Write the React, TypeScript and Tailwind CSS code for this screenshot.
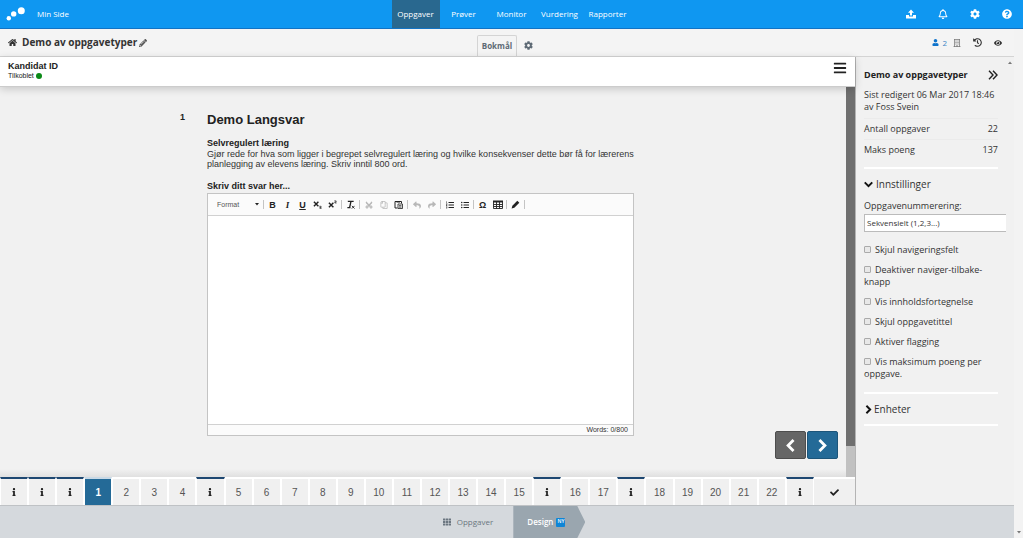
import type { ReactNode } from "react"
import {
  FaBars,
  FaCheck,
  FaCog,
  FaCut,
  FaEye,
  FaHistory,
  FaHome,
  FaInfo,
  FaListOl,
  FaListUl,
  FaPencilAlt,
  FaQuestionCircle,
  FaRegBell,
  FaRegBuilding,
  FaRegCopy,
  FaPaste,
  FaReply,
  FaShare,
  FaTh,
  FaUser,
} from "react-icons/fa"

const mainNav = ["Oppgaver", "Prøver", "Monitor", "Vurdering", "Rapporter"]

// "i" is an information page, numbers are questions
const pages = [
  "i", "i", "i", "1", "2", "3", "4", "i", "5", "6", "7", "8", "9", "10", "11",
  "12", "13", "14", "15", "i", "16", "17", "i", "18", "19", "20", "21", "22", "i",
]

const settings = [
  "Skjul navigeringsfelt",
  "Deaktiver naviger-tilbake-knapp",
  "Vis innholdsfortegnelse",
  "Skjul oppgavetittel",
  "Aktiver flagging",
  "Vis maksimum poeng per oppgave.",
]

function Chevron({ className }: { className: string }) {
  return (
    <svg viewBox="0 0 12 12" className={className} fill="none" stroke="currentColor" strokeWidth="2.6" aria-hidden="true">
      <path d="M3.200 1L8.200 6 3.200 11" />
    </svg>
  )
}

function UploadIcon() {
  return (
    <svg viewBox="0 0 10 10" className="size-[10px]" fill="currentColor" aria-hidden="true">
      <path d="M5 .5L8 3.800H6V6.500H4V3.800H2z" />
      <path d="M0 6h3v1.500h4V6h3v3.500H0z" />
    </svg>
  )
}

function TopBar() {
  const icons = [
    { label: "Last opp", icon: <UploadIcon /> },
    { label: "Varsler", icon: <FaRegBell /> },
    { label: "Innstillinger", icon: <FaCog /> },
    { label: "Hjelp", icon: <FaQuestionCircle /> },
  ]
  return (
    <header className="grid h-[29px] shrink-0 grid-cols-[1fr_auto_1fr] border-b border-[#1273c4] bg-[#0f97f1] text-[8px] text-white">
      <div className="flex items-center gap-[11px] pl-[6px]">
        <svg viewBox="0 0 20 15" className="h-[15px] w-5" fill="currentColor" aria-hidden="true">
          <circle cx="2.8" cy="11.3" r="2.2" />
          <circle cx="7.7" cy="6.9" r="2.7" />
          <circle cx="15.3" cy="3.7" r="3.5" />
        </svg>
        <a href="#">Min Side</a>
      </div>
      <nav className="flex">
        {mainNav.map((item, i) => (
          <a
            key={item}
            href="#"
            className={`flex w-12 items-center justify-center ${i === 0 ? "bg-[#29688f]" : ""}`}
          >
            {item}
          </a>
        ))}
      </nav>
      <div className="flex justify-end">
        {icons.map(({ label, icon }) => (
          <button key={label} aria-label={label} className="flex w-8 items-center justify-center text-[10px]">
            {icon}
          </button>
        ))}
      </div>
    </header>
  )
}

function SubHeader() {
  return (
    <div className="grid h-7 shrink-0 grid-cols-[1fr_auto_1fr] border-b border-[#d4d4d4] bg-[#f4f4f4]">
      <div className="flex items-center gap-[5px] pl-2 text-[#333]">
        <FaHome className="size-[9px]" />
        <h1 className="text-[10px] font-bold">Demo av oppgavetyper</h1>
        <button aria-label="Rediger tittel" className="-ml-[3px] text-[#555]">
          <FaPencilAlt className="size-2" />
        </button>
      </div>
      <div className="flex items-end gap-[7px] pr-1 text-[#5e6a75]">
        <button className="h-[21px] rounded-t-[2px] border border-b-0 border-[#d4d4d4] px-1 text-[8px] font-bold">
          Bokmål
        </button>
        <button aria-label="Språkinnstillinger" className="pb-[6px]">
          <FaCog className="size-[9px]" />
        </button>
      </div>
      <div className="flex items-center justify-end gap-3 pr-3 text-[#333]">
        <span className="flex items-center gap-[3px] text-[8px] text-[#3d86c6]">
          <FaUser className="size-[7px] text-[#0f74cc]" />2
          <FaRegBuilding className="ml-[3px] size-2 text-[#777]" />
        </span>
        <FaHistory className="size-[9px]" />
        <FaEye className="size-2" />
      </div>
    </div>
  )
}

function Separator() {
  return <span className="mx-px h-[9px] w-px shrink-0 bg-[#c4c4c4]" />
}

function Tool({ label, muted, children }: { label: string; muted?: boolean; children: ReactNode }) {
  return (
    <button
      aria-label={label}
      className={`flex w-[15px] shrink-0 items-center justify-center text-[9px] ${muted ? "text-[#b8b8b8]" : "text-[#222]"}`}
    >
      {children}
    </button>
  )
}

function Toolbar() {
  return (
    <div className="flex h-[22px] items-center border-b border-[#d1d1d1] bg-[#fbfbfb] pl-[9px]">
      <div className="flex w-[45px] items-center text-[#555]">
        <select aria-label="Format" className="w-[38px] appearance-none text-[7px]">
          <option>Format</option>
        </select>
        <svg viewBox="0 0 4 3" className="h-[3px] w-1" fill="#222" aria-hidden="true">
          <path d="M0 0h4L2 2.6z" />
        </svg>
      </div>
      <Separator />
      <Tool label="Fet"><b>B</b></Tool>
      <Tool label="Kursiv"><i className="font-['Liberation_Serif',serif] font-bold">I</i></Tool>
      <Tool label="Understreket"><b className="underline">U</b></Tool>
      <Tool label="Senket">
        <svg viewBox="0 0 10 10" className="size-[9px]" fill="none" stroke="currentColor" strokeWidth="1.6" aria-hidden="true">
          <path d="M1 2l5 5M6 2L1 7" />
          <path d="M7 7h2v1.3H7.6v1H9.5" strokeWidth=".8" />
        </svg>
      </Tool>
      <Tool label="Hevet">
        <svg viewBox="0 0 10 10" className="size-[9px]" fill="none" stroke="currentColor" strokeWidth="1.6" aria-hidden="true">
          <path d="M1 3l5 5M6 3L1 8" />
          <path d="M7 1h2v1.3H7.6v1H9.5" strokeWidth=".8" />
        </svg>
      </Tool>
      <Separator />
      <Tool label="Fjern formatering">
        <svg viewBox="0 0 10 10" className="size-[9px]" fill="none" stroke="currentColor" strokeWidth="1.5" aria-hidden="true">
          <path d="M2 1.5h6.5M5.5 1.5L4 8.500M1.500 8.500h3.500" />
          <path d="M6.500 6.500l3 3M9.500 6.500l-3 3" strokeWidth="1" />
        </svg>
      </Tool>
      <Separator />
      <Tool label="Klipp ut" muted><FaCut className="size-2 -rotate-90" /></Tool>
      <Tool label="Kopier" muted><FaRegCopy className="size-2 -scale-x-100" /></Tool>
      <Tool label="Lim inn">
        <svg viewBox="0 0 9 9" className="size-[9px]" fill="none" stroke="currentColor" aria-hidden="true">
          <path d="M3.500 8H1V1.500h6.500V3.500" />
          <path d="M2.500 1h3.500v1.500H2.500z" fill="currentColor" stroke="none" />
          <path d="M4 4h4.500v4.500H4zM5 5.700h2.500M5 7.100h2.500" strokeWidth=".8" />
        </svg>
      </Tool>
      <Separator />
      <Tool label="Angre" muted><FaReply className="size-2" /></Tool>
      <Tool label="Gjør om" muted><FaShare className="size-2" /></Tool>
      <Separator />
      <Tool label="Nummerert liste"><FaListOl className="size-2" /></Tool>
      <Tool label="Punktliste"><FaListUl className="size-2" /></Tool>
      <Separator />
      <Tool label="Spesialtegn"><b>Ω</b></Tool>
      <Tool label="Tabell">
        <svg viewBox="0 0 10 9" className="h-[9px] w-[10px]" fill="none" stroke="currentColor" aria-hidden="true">
          <path d="M.5 1.500h9v7h-9zM.5 4.500h9M.5 6.500h9M3.500 2v6.500M6.500 2v6.500" strokeWidth=".9" />
          <path d="M0 .5h10v2H0z" fill="currentColor" stroke="none" />
        </svg>
      </Tool>
      <Separator />
      <Tool label="Tegn">
        <svg viewBox="0 0 9 9" className="size-[9px]" fill="currentColor" aria-hidden="true">
          <path d="M6.300.8l2 2-5 5L.6 8.500l.8-2.800z" />
        </svg>
      </Tool>
      <Separator />
    </div>
  )
}

function Question() {
  return (
    <div className="mx-auto flex w-full max-w-[486px] pt-[25px] pr-8 text-[9px] leading-[10px] text-[#333]">
      <span className="w-[27px] shrink-0 font-bold text-[#222]">1</span>
      <div className="min-w-0 flex-1">
        <h2 className="text-[13px] leading-4 font-bold text-[#222]">Demo Langsvar</h2>
        <h3 className="mt-[10px] leading-[11px] font-bold text-[#222]">Selvregulert læring</h3>
        <p>
          Gjør rede for hva som ligger i begrepet selvregulert læring og hvilke konsekvenser dette bør få for lærerens
          planlegging av elevens læring. Skriv inntil 800 ord.
        </p>
        <label htmlFor="answer" className="mt-3 mb-[2px] block font-bold text-[#222]">
          Skriv ditt svar her...
        </label>
        <div className="border border-[#c4c4c4] bg-white">
          <Toolbar />
          <textarea id="answer" className="block h-[208px] w-full resize-none bg-white p-2 outline-none" />
          <div className="border-t border-[#d1d1d1] bg-[#fbfbfb] pr-[5px] text-right text-[7px] leading-[10px]">
            Words: 0/800
          </div>
        </div>
      </div>
    </div>
  )
}

function PageStrip() {
  return (
    <nav className="flex h-7 shrink-0 bg-[#f0f0f0] text-[10px] text-[#555]">
      {pages.map((page, i) => {
        const look =
          page === "1"
            ? "border-t-[#c9d9e6] bg-[#246a97] font-bold text-white"
            : page === "i"
              ? "border-t-[#1d4771] text-[#222]"
              : "border-t-white"
        return (
          <a
            key={i}
            href="#"
            aria-label={page === "i" ? "Informasjon" : undefined}
            className={`flex flex-1 items-center justify-center border-x border-t-2 border-x-white ${look}`}
          >
            {page === "i" ? <FaInfo className="size-2" /> : page}
          </a>
        )
      })}
      <a
        href="#"
        aria-label="Fullfør"
        className="flex w-[41px] items-center justify-center border-t-2 border-white text-[#222]"
      >
        <FaCheck className="size-[9px]" />
      </a>
    </nav>
  )
}

function Player() {
  return (
    <main className="flex min-w-0 flex-1 flex-col font-['Liberation_Sans',Arial,sans-serif]">
      <div className="z-10 flex h-[30px] shrink-0 items-start justify-between border-b border-[#ccc] bg-white pt-1 pr-2 pl-2 shadow-[0_2px_8px_rgba(0,0,0,0.18)]">
        <div className="text-[#222]">
          <div className="text-[9px] leading-[10px] font-bold">Kandidat ID</div>
          <div className="flex items-center gap-[2px] text-[7px] leading-[10px]">
            Tilkoblet <span className="size-[6px] rounded-full bg-[#0b8a17]" />
          </div>
        </div>
        <button aria-label="Meny" className="text-[#222]">
          <FaBars className="size-[14px]" />
        </button>
      </div>
      <div className="flex min-h-0 flex-1">
        <div className="relative min-w-0 flex-1 overflow-hidden bg-[#f1f1f1]">
          <Question />
          <div className="absolute right-2 bottom-[18px] flex gap-px text-white">
            <button
              aria-label="Forrige"
              className="flex h-7 w-[31px] items-center justify-center rounded-[2px] border border-[#4d4d4d] bg-[#666]"
            >
              <Chevron className="size-[13px] -scale-x-100" />
            </button>
            <button
              aria-label="Neste"
              className="flex h-7 w-[31px] items-center justify-center rounded-[2px] border border-[#1c557a] bg-[#246a97]"
            >
              <Chevron className="size-[13px]" />
            </button>
          </div>
          <div className="absolute inset-x-0 bottom-0 h-2 bg-linear-to-b from-transparent to-[#e0e0e0]" />
        </div>
        <div className="w-[9px] shrink-0 bg-[#c1c1c1]">
          <div className="h-[92%] bg-[#6f6f6f]" />
        </div>
      </div>
      <PageStrip />
    </main>
  )
}

function Sidebar() {
  return (
    <aside className="relative w-[159px] shrink-0 border-l border-[#b4b4b4] bg-[#f1f1f1] pt-3 pr-4 pl-2 text-[9px] leading-3 text-[#333]">
      <svg viewBox="0 0 4 3" className="absolute top-1 right-[2px] h-[3px] w-1" fill="#777" aria-hidden="true">
        <path d="M0 3h4L2 .4z" />
      </svg>
      <div className="flex items-center justify-between text-[#222]">
        <h2 className="font-bold">Demo av oppgavetyper</h2>
        <button aria-label="Skjul panel">
          <svg viewBox="0 0 10 10" className="size-[10px]" fill="none" stroke="currentColor" strokeWidth="1.4" aria-hidden="true">
            <path d="M1 .8L5 5 1 9.200M5 .8L9 5 5 9.200" />
          </svg>
        </button>
      </div>
      <p className="mt-2 border-b border-[#ebebeb] pb-[5px]">
        Sist redigert 06 Mar 2017 18:46
        <br />
        av Foss Svein
      </p>
      <dl>
        <div className="flex justify-between border-b border-[#ebebeb] py-1">
          <dt>Antall oppgaver</dt>
          <dd>22</dd>
        </div>
        <div className="flex justify-between py-1">
          <dt>Maks poeng</dt>
          <dd>137</dd>
        </div>
      </dl>
      <div className="mt-[7px] border-t-2 border-white pt-[9px]">
        <button className="flex items-center gap-[3px] text-[10px] leading-3">
          <Chevron className="size-[9px] rotate-90 text-[#111]" /> Innstillinger
        </button>
      </div>
      <label htmlFor="numbering" className="mt-[10px] block">
        Oppgavenummerering:
      </label>
      <div className="-mr-2">
        <select
          id="numbering"
          className="mt-[2px] block h-[18px] w-full appearance-none border border-r-0 border-[#bbb] bg-white pl-[2px] text-[8px]"
        >
          <option>Sekvensielt (1,2,3...)</option>
        </select>
      </div>
      <div className="mt-3 flex flex-col gap-2">
        {settings.map((item) => (
          <label key={item}>
            <input
              type="checkbox"
              className="mr-1 size-[7px] appearance-none rounded-[1px] border border-[#aaa] bg-[#e8e8e8] align-baseline"
            />
            {item}
          </label>
        ))}
      </div>
      <div className="mt-3 border-y-2 border-white py-[9px]">
        <button className="flex items-center gap-px text-[10px] leading-3">
          <Chevron className="size-[9px] text-[#111]" /> Enheter
        </button>
      </div>
    </aside>
  )
}

function Footer() {
  return (
    <footer className="flex h-[33px] shrink-0 justify-center border-t border-[#bfc2c5] bg-[#d5d9dd] text-[8px]">
      <a href="#" className="flex items-center gap-[6px] px-5 pl-[14px] text-[#6b7680]">
        <FaTh className="size-2" /> Oppgaver
      </a>
      <a
        href="#"
        className="flex w-[72px] items-center gap-[3px] bg-[#9aa6af] pl-[14px] font-semibold text-white [clip-path:polygon(0_0,64px_0,100%_50%,64px_100%,0_100%)]"
      >
        Design
        <span className="flex size-[9px] items-center justify-center rounded-[1px] bg-[#0e85d6] text-[5px]">NY</span>
      </a>
    </footer>
  )
}

export default function App() {
  return (
    <div className="flex h-screen flex-col bg-[#f1f1f1] font-['Open_Sans','Noto_Sans',sans-serif]">
      <TopBar />
      <div className="flex min-h-0 flex-1">
        <div className="flex min-w-0 flex-1 flex-col">
          <SubHeader />
          <div className="flex min-h-0 flex-1">
            <Player />
            <Sidebar />
          </div>
          <Footer />
        </div>
        <div className="flex w-[9px] flex-col items-center justify-end bg-[#f3f3f3] pb-1">
          <svg viewBox="0 0 4 3" className="h-[3px] w-1" fill="#777" aria-hidden="true">
            <path d="M0 0h4L2 2.600z" />
          </svg>
        </div>
      </div>
    </div>
  )
}
